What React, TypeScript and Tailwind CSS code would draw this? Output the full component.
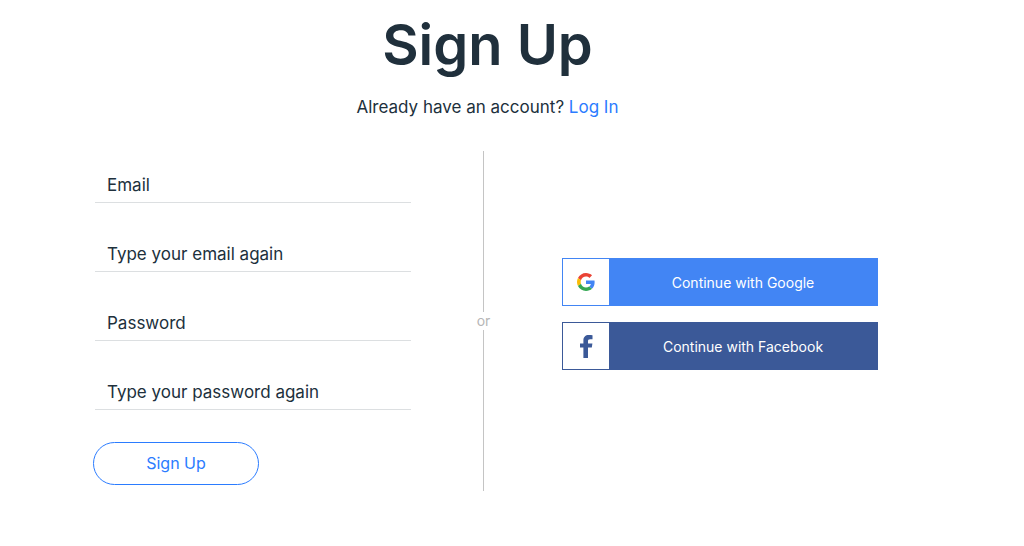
import { useState } from 'react'
import type { ReactNode } from 'react'

const FIELDS = [
  { id: 'email', label: 'Email', type: 'email' },
  { id: 'emailAgain', label: 'Type your email again', type: 'email' },
  { id: 'password', label: 'Password', type: 'password' },
  { id: 'passwordAgain', label: 'Type your password again', type: 'password' },
] as const

function GoogleIcon() {
  return (
    <svg viewBox="0 0 48 48" className="w-[18px] h-[18px]" aria-hidden="true">
      <path fill="#EA4335" d="M24 9.5c3.54 0 6.71 1.22 9.21 3.6l6.85-6.85C35.9 2.38 30.47 0 24 0 14.62 0 6.51 5.38 2.56 13.22l7.98 6.19C12.43 13.72 17.74 9.5 24 9.5z" />
      <path fill="#4285F4" d="M46.98 24.55c0-1.57-.15-3.09-.38-4.55H24v9.02h12.94c-.58 2.96-2.26 5.48-4.78 7.18l7.73 6c4.51-4.18 7.09-10.36 7.09-17.65z" />
      <path fill="#FBBC05" d="M10.53 28.59c-.48-1.45-.76-2.99-.76-4.59s.27-3.14.76-4.59l-7.98-6.19C.92 16.46 0 20.12 0 24c0 3.88.92 7.54 2.56 10.78l7.97-6.19z" />
      <path fill="#34A853" d="M24 48c6.48 0 11.93-2.13 15.89-5.81l-7.73-6c-2.15 1.45-4.92 2.3-8.16 2.3-6.26 0-11.57-4.22-13.47-9.91l-7.98 6.19C6.51 42.62 14.62 48 24 48z" />
    </svg>
  )
}

function FacebookIcon() {
  return (
    <svg viewBox="0 0 13 23" className="w-[13px] h-[23px]" fill="#3b5998" aria-hidden="true">
      <path d="M3.4 23V12.6H0V8.6h3.4V5.5C3.4 2 5.5.1 8.7.1c1.5 0 2.9.1 3.8.2v3.9h-2.3c-1.9 0-2.2.9-2.2 2.2v2.2h4.4l-.6 4H8V23z" />
    </svg>
  )
}

function SocialButton({ icon, className, children }: { icon: ReactNode; className: string; children: ReactNode }) {
  return (
    <button type="button" className={`flex w-full h-12 border text-sm text-white ${className}`}>
      <span className="flex items-center justify-center w-[46px] h-full bg-white">{icon}</span>
      <span className="flex-1 self-center pt-0.5">{children}</span>
    </button>
  )
}

export default function App() {
  const [values, setValues] = useState<Record<string, string>>({})

  return (
    <main className="bg-white pt-[15px] pl-[95px] pr-[146px] font-['Inter',sans-serif] text-[#20303c]">
      <header className="text-center pl-0.5">
        <h1 className="text-[56px] leading-[60px] font-semibold">Sign Up</h1>
        <p className="mt-5 text-[17px] leading-6">
          Already have an account?{' '}
          <a href="#login" className="text-[#2b7cff]">Log In</a>
        </p>
      </header>

      <div className="grid grid-cols-[1fr_151px_1fr] mt-8">
        <form onSubmit={e => e.preventDefault()} className="flex flex-col gap-8 pt-[15px] pb-1.5">
          {FIELDS.map(f => (
            <div key={f.id} className="grid items-center h-[37px] pt-px border-b border-[#dcdfe1] text-[17px] leading-6">
              {/* label sits in the input's cell until something is typed */}
              {!values[f.id] && (
                <label htmlFor={f.id} className="col-start-1 row-start-1 px-3 cursor-text">{f.label}</label>
              )}
              <input
                id={f.id}
                type={f.type}
                value={values[f.id] ?? ''}
                onChange={e => setValues({ ...values, [f.id]: e.target.value })}
                className="col-start-1 row-start-1 w-full h-full px-3 bg-transparent outline-none"
              />
            </div>
          ))}
          <button type="submit" className="-ml-0.5 w-[166px] h-[43px] pb-0.5 border border-[#2b7cff] rounded-full text-base text-[#2b7cff]">
            Sign Up
          </button>
        </form>

        {/* Divider */}
        <div className="flex flex-col items-center pr-1.5 text-sm text-[#b6b6b6]">
          <span className="flex-1 w-px bg-[#c4c4c4]" />
          <span className="leading-[18px]">or</span>
          <span className="flex-1 w-px bg-[#c4c4c4]" />
        </div>

        <div className="flex flex-col justify-center gap-4 pb-3.5">
          <SocialButton icon={<GoogleIcon />} className="bg-[#4285f4] border-[#4285f4]">
            Continue with Google
          </SocialButton>
          <SocialButton icon={<FacebookIcon />} className="bg-[#3b5998] border-[#3b5998]">
            Continue with Facebook
          </SocialButton>
        </div>
      </div>
    </main>
  )
}
